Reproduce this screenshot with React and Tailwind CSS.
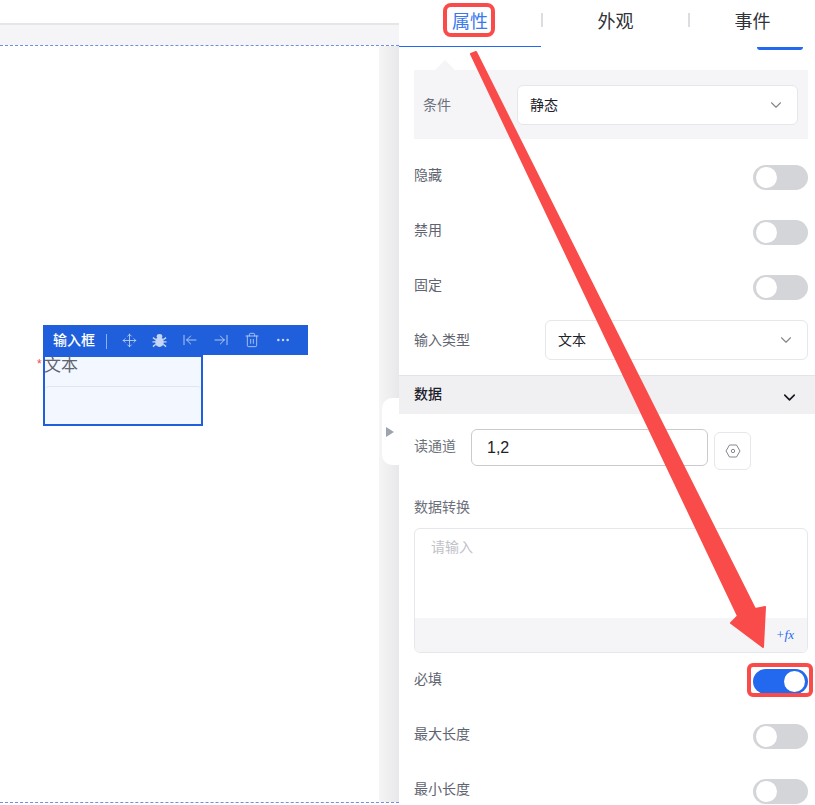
import { ChevronDown, Move, ArrowLeftToLine, ArrowRightToLine, Trash2, Ellipsis } from 'lucide-react';

const Toggle = ({ on }) => (
    <div className={`w-[55px] h-[25px] rounded-full flex items-center px-[3px] ${on ? 'bg-[#2369f0] justify-end' : 'bg-[#d4d5d8] justify-start'}`}>
        <div className="w-[21px] h-[21px] rounded-full bg-white" />
    </div>
);

const ToggleRow = ({ label, on, className = '' }) => (
    <div className={`h-[25px] flex items-center justify-between ${className}`}>
        <span className="text-sm text-[#5f6470] -mt-[5px]">{label}</span>
        <Toggle on={on} />
    </div>
);

const SelectBox = ({ value, className = '' }) => (
    <div className={`h-10 bg-white border border-[#e6e7ea] rounded-md flex items-center justify-between pl-[12px] pr-[12px] ${className}`}>
        <span className="text-sm text-[#1d2129]">{value}</span>
        <ChevronDown size={18} strokeWidth={1.5} className="text-[#85878d]" />
    </div>
);

function Canvas() {
    return (
        <div className="w-[399px] h-full flex flex-col shrink-0">
            <div className="h-[23px] bg-white" />
            <div className="h-[2px] bg-[#e6e6e9]" />
            <div className="h-[20px] bg-[#f5f5f7]" />
            <div className="h-[758px] border-y border-dashed border-[#6f8fe0] flex relative">
                <div className="flex-1 bg-white pl-[43px] pt-[279px]">
                    <div className="w-[265px] h-[30px] bg-[#1f5fdb] flex items-center pl-[10px] text-white">
                        <span className="text-sm font-medium">输入框</span>
                        <div className="w-px h-[15px] bg-[#8fb0ee] ml-[11px] mt-[3px]" />
                        <div className="flex items-center gap-[15px] ml-[15px] text-[#c6d7f6]">
                            <Move size={15} strokeWidth={1.3} />
                            <svg width="15" height="15" viewBox="0 0 16 16" fill="currentColor">
                                <ellipse cx="8" cy="3.4" rx="3" ry="2.4" />
                                <ellipse cx="8" cy="9.6" rx="4.6" ry="5.4" />
                                <path d="M1 5l3 2M15 5l-3 2M0.5 9.5h3.5M15.5 9.5H12M1 14.5l3-2.5M15 14.5l-3-2.5" stroke="currentColor" strokeWidth="1.5" />
                            </svg>
                            <ArrowLeftToLine size={16} strokeWidth={1.3} />
                            <ArrowRightToLine size={16} strokeWidth={1.3} />
                            <Trash2 size={16} strokeWidth={1.2} />
                            <Ellipsis size={16} strokeWidth={1.8} />
                        </div>
                    </div>
                    <div className="w-[160px] h-[71px] border-2 border-[#1f5fdb] bg-[#f3f7ff] relative">
                        <span className="absolute -left-[8px] top-0 text-xs leading-[14px] text-[#f5484a]">*</span>
                        <div className="h-[29px] text-[17px] leading-[18px] text-[#5f6470] -ml-[1px]">文本</div>
                        <div className="border-t border-[#e3e5ec] rounded-t-sm h-[30px]" />
                    </div>
                </div>
                <div className="w-[20px] bg-gradient-to-r from-[#f5f5f6] to-[#e8e8ea]" />
                <div className="absolute right-0 top-[352px] w-[17px] h-[67px] bg-white rounded-l-[10px] flex items-center pl-[4px]">
                    <div className="w-0 h-0 border-y-[5px] border-y-transparent border-l-[8px] border-l-[#9da3b2]" />
                </div>
            </div>
        </div>
    );
}

function Panel() {
    return (
        <div className="w-[416px] h-full bg-white overflow-hidden flex flex-col shrink-0">
            <div className="h-[47px] flex text-[#303338] text-lg">
                <div className="w-[142px] h-[47px] border-b border-[#2369f0] flex items-center justify-center text-[#3b78ee] pb-[3px]">属性</div>
                <div className="w-[2px] h-[14px] bg-[#dcdde0] mt-[13px]" />
                <div className="w-[145px] flex items-center justify-center pb-[3px]">外观</div>
                <div className="w-[2px] h-[14px] bg-[#dcdde0] mt-[13px]" />
                <div className="flex-1 flex items-center justify-center pb-[3px]">事件</div>
            </div>

            <div className="px-[15px] pr-[7px]">
                <div className="flex justify-end pr-[5px] h-[3px]">
                    <div className="w-[46px] h-[3px] bg-[#2369f0] rounded-b-full" />
                </div>
                <div className="h-[20px] pl-[21px] pt-[10px]">
                    <div className="w-0 h-0 border-x-[10px] border-x-transparent border-b-[10px] border-b-[#f5f5f7]" />
                </div>
                <div className="h-[69px] bg-[#f5f5f7] flex items-center pl-[9px] pr-[10px]">
                    <span className="text-sm text-[#6c707a] w-[94px]">条件</span>
                    <SelectBox value="静态" className="flex-1" />
                </div>

                <ToggleRow label="隐藏" className="mt-[26px]" />
                <ToggleRow label="禁用" className="mt-[30px]" />
                <ToggleRow label="固定" className="mt-[30px]" />

                <div className="mt-[20px] flex items-center">
                    <span className="text-sm text-[#5f6470] w-[131px]">输入类型</span>
                    <SelectBox value="文本" className="flex-1" />
                </div>
            </div>

            <div className="mt-[15px] h-[39px] bg-[#f0f0f3] border-t border-[#e3e4e7] flex items-center justify-between pl-[15px] pr-[16px]">
                <span className="text-sm text-[#1d2129] font-medium -mt-[2px]">数据</span>
                <ChevronDown size={19} strokeWidth={2} className="text-[#15171c] mt-[5px]" />
            </div>

            <div className="px-[15px] pr-[7px]">
                <div className="mt-[15px] flex items-start">
                    <span className="text-sm text-[#6c707a] w-[57px] mt-[7px]">读通道</span>
                    <div className="w-[237px] h-[37px] border border-[#c9cbcf] rounded-md flex items-center pl-[15px] text-base text-[#1d2129]">1,2</div>
                    <div className="w-[37px] h-[38px] ml-[6px] mt-[3px] border border-[#e6e7ea] rounded-md flex items-center justify-center text-[#85878d]">
                        <svg width="16" height="14" viewBox="0 0 16 14" fill="none" stroke="currentColor" strokeWidth="1">
                            <path d="M4.5 1h7L15 7l-3.500 6h-7L1 7z" />
                            <circle cx="8" cy="7" r="1.700" />
                        </svg>
                    </div>
                </div>

                <div className="mt-[27px] text-sm leading-[20px] text-[#6c707a]">数据转换</div>

                <div className="mt-[11px] h-[125px] border border-[#e6e7ea] rounded-md overflow-hidden flex flex-col">
                    <div className="flex-1 pl-[16px] pt-[8px] text-sm leading-[20px] text-[#bfc2c8]">请输入</div>
                    <div className="h-[34px] bg-[#f5f5f7] flex items-center justify-end pr-[13px] text-[#2369f0] text-[13px] italic font-['Liberation_Serif',serif]">+fx</div>
                </div>

                <ToggleRow label="必填" on className="mt-[16px]" />
                <ToggleRow label="最大长度" className="mt-[30px]" />
                <ToggleRow label="最小长度" className="mt-[30px]" />
            </div>
        </div>
    );
}

export default function App() {
    return (
        <div className="w-[815px] h-[805px] relative overflow-hidden flex bg-white font-['Liberation_Sans','Noto_Sans_CJK_SC',sans-serif]">
            <Canvas />
            <Panel />

            {/* anotacoes em vermelho por cima da tela */}
            <div className="absolute left-[443px] top-[3px] w-[52px] h-[34px] border-[4px] border-[#f94c4a] rounded-lg" />
            <div className="absolute left-[747px] top-[663px] w-[66px] h-[34px] border-[4px] border-[#f94c4a] rounded-md" />
            <svg className="absolute left-0 top-0 pointer-events-none" width="815" height="805" viewBox="0 0 815 805">
                <polygon
                    points="471,54 476,52 755,609 765,607 763,647 731,623 738,616"
                    fill="#f94c4a"
                    stroke="#f94c4a"
                    strokeWidth="2"
                    strokeLinejoin="round"
                />
            </svg>
        </div>
    );
}
